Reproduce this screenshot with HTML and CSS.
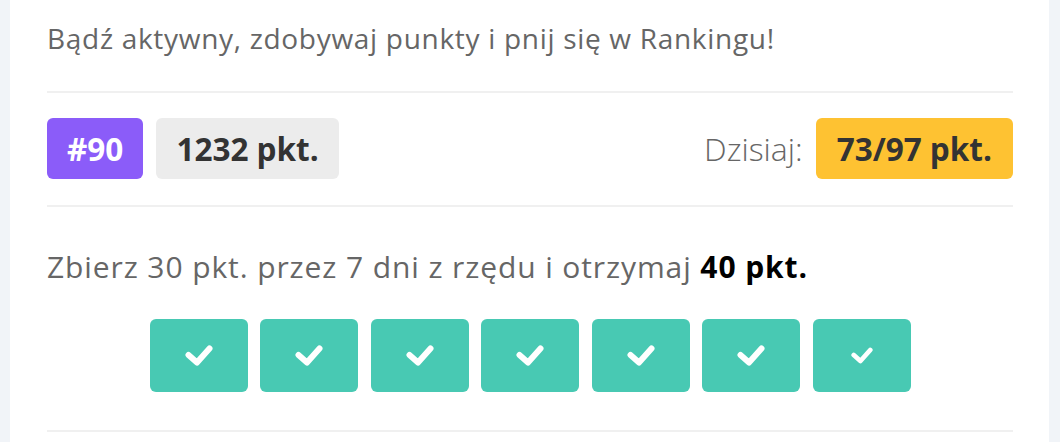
FILE: index.html
```html
<!DOCTYPE html>
<html lang="pl">
<head>
<meta charset="utf-8">
<link rel="stylesheet" href="styles.css">
</head>
<body>
<div class="card">
  <p class="intro">Bądź aktywny, zdobywaj punkty i pnij się w Rankingu!</p>
  <div class="stats">
    <div class="stats-left">
      <span class="badge badge-rank">#90</span>
      <span class="badge badge-points">1232 pkt.</span>
    </div>
    <div class="stats-right">
      <span class="today-label">Dzisiaj:</span>
      <span class="badge badge-today">73/97 pkt.</span>
    </div>
  </div>
  <div class="streak">
    <p class="streak-text">Zbierz 30 pkt. przez 7 dni z rzędu i otrzymaj <strong>40 pkt.</strong></p>
    <div class="days">
      <div class="day"><svg class="check" viewBox="0 0 28 21"><polyline points="3.5,10 12,17.5 24.5,3.5"/></svg></div>
      <div class="day"><svg class="check" viewBox="0 0 28 21"><polyline points="3.5,10 12,17.5 24.5,3.5"/></svg></div>
      <div class="day"><svg class="check" viewBox="0 0 28 21"><polyline points="3.5,10 12,17.5 24.5,3.5"/></svg></div>
      <div class="day"><svg class="check" viewBox="0 0 28 21"><polyline points="3.5,10 12,17.5 24.5,3.5"/></svg></div>
      <div class="day"><svg class="check" viewBox="0 0 28 21"><polyline points="3.5,10 12,17.5 24.5,3.5"/></svg></div>
      <div class="day"><svg class="check" viewBox="0 0 28 21"><polyline points="3.5,10 12,17.5 24.5,3.5"/></svg></div>
      <div class="day"><svg class="check check-small" viewBox="0 0 28 21"><polyline points="3.5,10 12,17.5 24.5,3.5"/></svg></div>
    </div>
  </div>
</div>
</body>
</html>
```
FILE: styles.css
```css
* { box-sizing: border-box; }
html, body { margin: 0; padding: 0; }
body {
  background: #f1f4f8;
  font-family: "Open Sans", "Noto Sans", sans-serif;
  width: 1060px;
  height: 442px;
  overflow: hidden;
}
.card {
  background: #fff;
  margin: 0 11px 0 10px;
  padding: 0 36px 0 37px;
  height: 442px;
}
.intro {
  margin: 0;
  padding: 20px 0 35px;
  font-size: 28px;
  letter-spacing: 0.7px;
  line-height: 36px;
  color: #666;
  border-bottom: 2px solid #f0f0f0;
}
.stats {
  display: flex;
  justify-content: space-between;
  align-items: center;
  padding: 25px 0 26px;
  border-bottom: 2px solid #f0f0f0;
}
.stats-left, .stats-right {
  display: flex;
  align-items: center;
  gap: 13px;
}
.badge {
  display: inline-flex;
  align-items: center;
  height: 61px;
  padding: 0 20px;
  border-radius: 6px;
  font-size: 31.5px;
  font-weight: 700;
  color: #333;
}
.badge-rank { background: #8b5cf9; color: #fff; }
.badge-points { background: #ececec; }
.badge-today { background: #fec232; padding: 0 21px; }
.today-label {
  font-size: 32px;
  font-weight: 300;
  color: #666;
}
.streak {
  padding: 40px 0 38px;
  border-bottom: 2px solid #f0f0f0;
}
.streak-text {
  margin: 0;
  font-size: 30px;
  letter-spacing: 0.9px;
  line-height: 40px;
  color: #666;
}
.streak-text strong { color: #000; font-weight: 700; }
.days {
  display: flex;
  justify-content: center;
  gap: 12.5px;
  margin-top: 32px;
}
.day {
  width: 98px;
  height: 73px;
  background: #48c9b3;
  border-radius: 6px;
  display: flex;
  align-items: center;
  justify-content: center;
}
.check {
  width: 28px;
  height: 21px;
  fill: none;
  stroke: #fff;
  stroke-width: 6;
  stroke-linecap: round;
  stroke-linejoin: round;
}
.check-small { width: 22px; height: 17px; }
```
